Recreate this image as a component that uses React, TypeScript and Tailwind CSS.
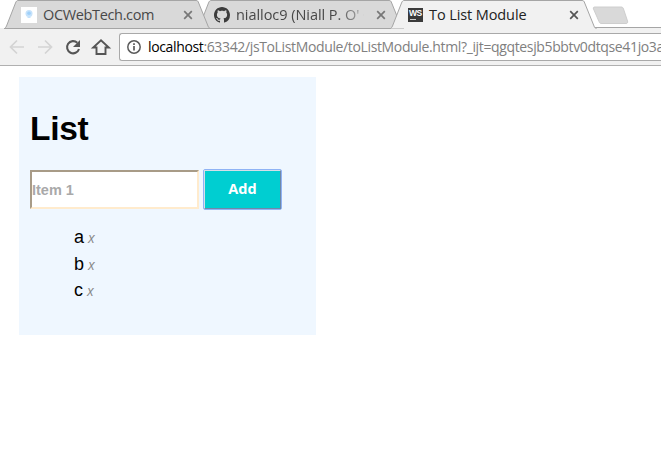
import type { ReactNode } from "react";

type TabProps = {
  title: ReactNode;
  icon: ReactNode;
  active?: boolean;
  className: string;
  fade?: boolean;
};

function Cross({ active }: { active?: boolean }) {
  return (
    <svg width="10" height="10" viewBox="0 0 10 10" className="shrink-0">
      <path d="M1.200 1.200 8.800 8.800M8.800 1.200 1.200 8.800" stroke={active ? "#555" : "#777"} strokeWidth="1.700" fill="none" />
    </svg>
  );
}

function Tab({ title, icon, active, className, fade }: TabProps) {
  return (
    <div className={"relative h-[29px] w-[207px] shrink-0 " + className}>
      <svg className="absolute inset-0" width="207" height="29" viewBox="0 0 207 29">
        <path
          d="M.5 28.500C1.500 28 2 27 2.500 26L11.500 3C12.300 1 13 .5 14 .5H192C193.500 .5 194 1 194.700 3L204 26C204.500 27.500 205 28 206.500 28.500"
          fill={active ? "#f1f1f1" : "#d9d9d9"}
          stroke="#a5a5a5"
        />
        {!active && <path d="M0 28.500H207" stroke="#a5a5a5" />}
      </svg>
      <div className="relative flex h-[29px] items-center pl-[17px]">
        {icon}
        <div
          className={
            "ml-[6px] w-[128px] shrink-0 whitespace-nowrap text-[14.500px] leading-[20px] " +
            (active ? "text-[#222] " : "text-[#484848] ") +
            (fade ? "[mask-image:linear-gradient(to_right,#000_100px,transparent_138px)]" : "")
          }
        >
          {title}
        </div>
        <div className="ml-[12px] flex pt-px">
          <Cross active={active} />
        </div>
      </div>
    </div>
  );
}

function BulbIcon() {
  return (
    <svg width="16" height="16" viewBox="0 0 16 16" className="shrink-0">
      <rect width="16" height="16" fill="#fff" />
      <circle cx="8" cy="6.500" r="3.500" fill="#c5e2fb" />
      <circle cx="8" cy="6.300" r="1.800" fill="#9fd0f9" />
      <path d="M6.500 9.500h3v1.500h-3z" fill="#c5e2fb" />
    </svg>
  );
}

function GithubIcon() {
  return (
    <svg width="16" height="16" viewBox="0 0 16 16" className="shrink-0">
      <path
        fill="#3c3c3c"
        d="M8 0C3.580 0 0 3.580 0 8c0 3.540 2.290 6.530 5.470 7.590.4.070.55-.17.55-.38 0-.19-.01-.82-.01-1.490-2.010.37-2.530-.49-2.690-.94-.09-.23-.48-.94-.82-1.130-.28-.15-.68-.52-.01-.53.63-.01 1.080.58 1.230.82.72 1.210 1.870.87 2.330.66.07-.52.28-.87.51-1.070-1.780-.2-3.640-.89-3.640-3.950 0-.87.31-1.590.82-2.150-.08-.2-.36-1.020.08-2.120 0 0 .67-.21 2.200.82.64-.18 1.320-.27 2-.27s1.360.09 2 .27c1.530-1.040 2.200-.82 2.200-.82.44 1.100.16 1.920.08 2.120.51.56.82 1.270.82 2.150 0 3.070-1.870 3.750-3.650 3.950.29.25.54.73.54 1.480 0 1.070-.01 1.930-.01 2.200 0 .21.15.46.55.38A8.013 8.013 0 0 0 16 8c0-4.420-3.580-8-8-8z"
      />
    </svg>
  );
}

function WebStormIcon() {
  return (
    <div className="ml-px mt-px flex h-[14px] w-[15px] shrink-0 flex-col items-start bg-[#3a3a3a] pl-px">
      <span className="font-['Liberation_Sans',sans-serif] text-[8.500px] font-bold leading-[10px] tracking-[-0.600px] text-white">WS</span>
      <span className="ml-px mt-px h-px w-[6px] bg-[#ccc]" />
    </div>
  );
}

function Toolbar() {
  return (
    <div className="flex h-[38px] items-center border-b border-[#b0b0b0] bg-[#f1f1f1] pl-[9px]">
      <svg width="110" height="36" viewBox="0 0 110 36" className="shrink-0" fill="none">
        <path d="M15 18H2M8 11.500 1.500 18 8 24.500M29 18h13M36 11.500 42.500 18 36 24.500" stroke="#d4d4d4" strokeWidth="1.700" />
        <path d="M70 20A6.100 6.100 0 1 1 68.300 13.700" stroke="#555" strokeWidth="2.100" />
        <path d="M71 11v7h-7z" fill="#555" />
        <path d="M86.500 18.500H84.200L92 11.200 99.800 18.500H96.500V25H87.500V18.500z" stroke="#555" strokeWidth="1.900" />
      </svg>
      <div className="flex h-[28px] flex-1 items-center overflow-hidden rounded-l-[3px] border border-r-0 border-[#a9a9a9] bg-white pl-[7px]">
        <svg width="14" height="14" viewBox="0 0 14 14" className="shrink-0" fill="none">
          <circle cx="7" cy="7" r="6.200" stroke="#5a5a5a" strokeWidth="1.500" />
          <path d="M7 6v4.500M7 3.300v1.700" stroke="#5a5a5a" strokeWidth="1.700" />
        </svg>
        <div className="ml-[7px] whitespace-nowrap text-[14px] leading-[20px] tracking-[-0.360px] text-[#808080]">
          <span className="text-black">localhost</span>:63342/jsToListModule/toListModule.html?_ijt=qgqtesjb5bbtv0dtqse41jo3a
        </div>
      </div>
    </div>
  );
}

export default function App() {
  return (
    <div className="h-[464px] w-[661px] overflow-hidden bg-white">
      <div className="font-['Open_Sans','Noto_Sans',sans-serif]">
        <div className="flex h-[28px] pl-[4px]">
          <Tab className="z-10" icon={<BulbIcon />} title={<span className="tracking-[-0.350px]">OCWebTech.com</span>} />
          <Tab className="-ml-[14px]" icon={<GithubIcon />} fade title={<span className="tracking-[-0.050px]">nialloc9 (Niall P. O' C</span>} />
          <Tab className="z-20 -ml-[14px]" active icon={<WebStormIcon />} title={<span className="tracking-[-0.100px]">To List Module</span>} />
          <div className="-ml-[5px] flex-1 border-b border-[#a5a5a5]">
            <svg width="37" height="19" viewBox="0 0 37 19" className="mt-[6px]">
              <path d="M3 1h26c1.500 0 2 .5 2.500 2l4 12c.5 1.500 0 2.500-1.500 2.500H10c-2 0-2.500-.5-3-2L1.500 3C1 1.500 1.500 1 3 1z" fill="#d9d9d9" stroke="#cecece" />
            </svg>
          </div>
        </div>
        <Toolbar />
      </div>
      <main className="ml-[19px] mt-[11px] h-[258px] w-[297px] bg-[#eff7ff] pl-[11px] pt-[32px] font-['Liberation_Sans',Arial,sans-serif]">
        <h1 className="text-[33.500px] font-bold leading-[40px] tracking-[-0.300px] text-black">List</h1>
        <div className="mt-[20px] flex">
          <input
            className="mt-px h-[39px] w-[169px] border-2 border-b-[#ffebcd] border-l-[#a89b87] border-r-[#ffebcd] border-t-[#a89b87] bg-white text-[14.500px] font-bold outline-none placeholder:text-[#a9a9a9]"
            placeholder="Item 1"
          />
          <div className="ml-[4px] flex h-[41px] w-[79px] rounded-[2px] border border-[#8fb3f5] bg-[#8fb3f5]">
            <button className="flex-1 border border-b-[#7088a8] border-l-[#d5dfe8] border-r-[#7088a8] border-t-[#d5dfe8] bg-[#00ced1] pb-[2px] font-['Open_Sans',sans-serif] text-[14.500px] font-bold text-white">
              Add
            </button>
          </div>
        </div>
        <ul className="mt-[14px] pl-[44px] text-[18px] leading-[26.500px] text-black">
          {["a", "b", "c"].map((item) => (
            <li key={item}>
              {item}
              <i className="ml-[4px] font-['Open_Sans',sans-serif] text-[14px] leading-none text-[#888]">x</i>
            </li>
          ))}
        </ul>
      </main>
    </div>
  );
}
